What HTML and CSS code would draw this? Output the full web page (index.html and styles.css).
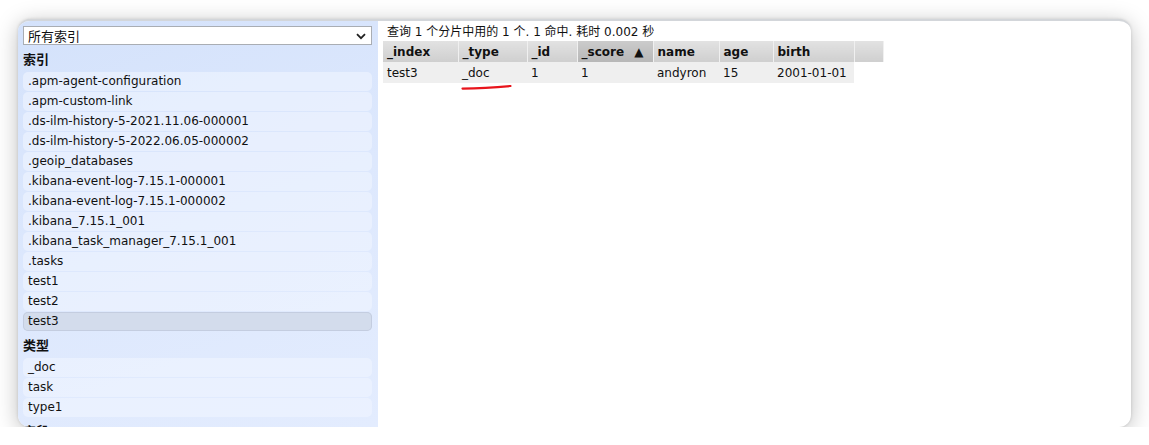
FILE: index.html
```html
<!DOCTYPE html>
<html lang="zh">
<head>
<meta charset="utf-8">
<title>elasticsearch-head</title>
<link rel="stylesheet" href="styles.css">
</head>
<body>
<div class="window">
  <aside class="sidebar">
    <div class="select">
      <span>所有索引</span>
      <svg class="chev" width="10" height="7" viewBox="0 0 10 7"><path d="M1 1.2 L5 5.2 L9 1.2" fill="none" stroke="#222" stroke-width="1.8"/></svg>
    </div>
    <div class="heading">索引</div>
    <ul class="list">
      <li>.apm-agent-configuration</li>
      <li>.apm-custom-link</li>
      <li>.ds-ilm-history-5-2021.11.06-000001</li>
      <li>.ds-ilm-history-5-2022.06.05-000002</li>
      <li>.geoip_databases</li>
      <li>.kibana-event-log-7.15.1-000001</li>
      <li>.kibana-event-log-7.15.1-000002</li>
      <li>.kibana_7.15.1_001</li>
      <li>.kibana_task_manager_7.15.1_001</li>
      <li>.tasks</li>
      <li>test1</li>
      <li>test2</li>
      <li class="selected">test3</li>
    </ul>
    <div class="heading">类型</div>
    <ul class="list">
      <li>_doc</li>
      <li>task</li>
      <li>type1</li>
    </ul>
    <div class="heading">字段</div>
  </aside>
  <main class="main">
    <div class="summary">查询 1 个分片中用的 1 个. 1 命中. 耗时 0.002 秒</div>
    <div class="table-wrap">
      <table class="results">
        <thead>
          <tr>
            <th class="c1">_index</th>
            <th class="c2">_type</th>
            <th class="c3">_id</th>
            <th class="c4 sorted">_score <span class="arrow">▲</span></th>
            <th class="c5">name</th>
            <th class="c6">age</th>
            <th class="c7">birth</th>
            <th class="c8"></th>
          </tr>
        </thead>
        <tbody>
          <tr>
            <td>test3</td>
            <td>_doc</td>
            <td>1</td>
            <td>1</td>
            <td>andyron</td>
            <td>15</td>
            <td>2001-01-01</td>
            <td class="blank"></td>
          </tr>
        </tbody>
      </table>
      <svg class="mark" width="52" height="8" viewBox="0 0 52 8"><path d="M1.5 5.6 Q 24 5.2 49.5 3" fill="none" stroke="#e8141b" stroke-width="2.2" stroke-linecap="round"/></svg>
    </div>
  </main>
</div>
</body>
</html>
```
FILE: styles.css
```css
* { box-sizing: border-box; }
html, body {
  margin: 0;
  padding: 0;
  background: #ffffff;
}
body {
  font-family: "DejaVu Sans", Verdana, "Noto Sans CJK SC", sans-serif;
  font-size: 12px;
  color: #111;
}
.window {
  margin: 19px 0 0 18px;
  width: 1113px;
  height: 408px;
  border-radius: 12px;
  overflow: hidden;
  display: flex;
  background: #fff;
  border-top: 2px solid #d3d6da;
  box-shadow: 0 4px 22px rgba(0,0,0,0.26), 0 0 3px rgba(0,0,0,0.14);
}
.sidebar {
  width: 360px;
  flex: none;
  background: linear-gradient(160deg, #d4e2fb 0%, #dde8fd 50%, #e3ecfe 100%);
  padding: 5px 6px 0 5px;
  overflow: hidden;
}
.select {
  height: 19px;
  margin-bottom: 1px;
  background: #fff;
  border: 1px solid #a9adb3;
  display: flex;
  align-items: center;
  justify-content: space-between;
  padding: 0 5px 0 4px;
  font-size: 13px;
  font-family: "Noto Sans CJK SC", sans-serif;
}
.chev { margin-top: 1px; }
.heading {
  font-family: "Noto Sans CJK SC", sans-serif;
  font-weight: 700;
  font-size: 13px;
  height: 26px;
  line-height: 26px;
}
.list {
  list-style: none;
  margin: 0;
  padding: 0;
}
.list li {
  height: 19px;
  line-height: 19px;
  margin-bottom: 1px;
  padding-left: 5px;
  background: rgba(240, 245, 255, 0.6);
  border-radius: 5px;
  white-space: nowrap;
}
.list li.selected {
  background: #d3dcec;
  box-shadow: inset 0 0 0 1px #c4cde0;
}
.main {
  flex: 1;
  padding: 1px 0 0 5px;
}
.summary {
  padding-left: 4px;
  height: 19px;
  line-height: 20px;
  font-family: "DejaVu Sans", "Noto Sans CJK SC", sans-serif;
}
.table-wrap {
  position: relative;
}
.results {
  border-collapse: collapse;
  table-layout: fixed;
}
.results th {
  height: 21px;
  text-align: left;
  font-weight: 700;
  padding: 0 4px;
  background: linear-gradient(#e2e2e2, #cfcfcf);
  border-right: 1px solid #f0f0f0;
  border-left: 1px solid #bdbdbd;
  white-space: nowrap;
}
.results th:first-child { border-left: none; }
.results th.sorted {
  background: linear-gradient(#cbcbcb, #b7b7b7);
}
.arrow { font-size: 12px; margin-left: 6px; }
.results td {
  height: 21px;
  padding: 0 4px;
  background: #efefef;
  white-space: nowrap;
}
.results td.blank { background: transparent; }
.c1 { width: 75px; }
.c2 { width: 69px; }
.c3 { width: 50px; }
.c4 { width: 76px; }
.c5 { width: 66px; }
.c6 { width: 54px; }
.c7 { width: 81px; }
.c8 { width: 29px; }
.mark {
  position: absolute;
  left: 78px;
  top: 42px;
}
```
